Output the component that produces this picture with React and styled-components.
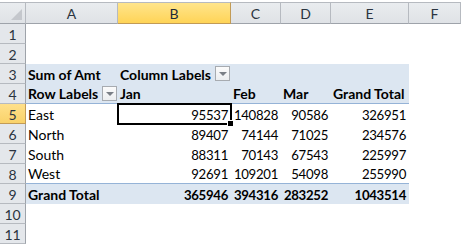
import styled, { createGlobalStyle } from "styled-components";

const GlobalStyle = createGlobalStyle`
  html, body { margin: 0; padding: 0; background: #ffffff; }
  body { font-family: Lato, "Liberation Sans", sans-serif; }
`;

const columns = ["A", "B", "C", "D", "E", "F"];

const regions = [
  { name: "East", values: [95537, 140828, 90586, 326951] },
  { name: "North", values: [89407, 74144, 71025, 234576] },
  { name: "South", values: [88311, 70143, 67543, 225997] },
  { name: "West", values: [92691, 109201, 54098, 255990] },
];

const totals = [365946, 394316, 283252, 1043514];

export default function App() {
  return (
    <>
      <GlobalStyle />
      <Window>
        <TopStrip />
        <Sheet>
          <Corner>
            <CornerMark />
          </Corner>
          {columns.map((c) => (
            <ColHead key={c} $active={c === "B"}>
              {c}
            </ColHead>
          ))}

          <RowHead>1</RowHead>
          {columns.map((c) => (
            <Cell key={c} />
          ))}

          <RowHead>2</RowHead>
          {columns.map((c) => (
            <Cell key={c} />
          ))}

          <RowHead>3</RowHead>
          <Cell $fill $bold>Sum of Amt</Cell>
          <Cell $fill $bold>
            Column Labels
            <DropButton />
          </Cell>
          <Cell $fill />
          <Cell $fill />
          <Cell $fill />
          <Cell />

          <RowHead>4</RowHead>
          <Cell $fill $bold $lineBottom>
            Row Labels
            <DropButton />
          </Cell>
          <Cell $fill $bold $lineBottom>Jan</Cell>
          <Cell $fill $bold $lineBottom>Feb</Cell>
          <Cell $fill $bold $lineBottom>Mar</Cell>
          <Cell $fill $bold $lineBottom>Grand Total</Cell>
          <Cell />

          {regions.map((r, i) => (
            <Row key={r.name} n={i + 5} region={r} last={i === regions.length - 1} />
          ))}

          <RowHead>9</RowHead>
          <Cell $fill $bold>Grand Total</Cell>
          {totals.map((t) => (
            <Cell key={t} $fill $bold $num>
              {t}
            </Cell>
          ))}
          <Cell />

          <RowHead>10</RowHead>
          {columns.map((c) => (
            <Cell key={c} />
          ))}

          <RowHead>11</RowHead>
          {columns.map((c) => (
            <Cell key={c} />
          ))}
        </Sheet>
      </Window>
    </>
  );
}

function Row({ n, region, last }) {
  return (
    <>
      <RowHead $active={n === 5}>{n}</RowHead>
      <Cell $lineBottom={last}>{region.name}</Cell>
      {region.values.map((v, i) => (
        <Cell key={i} $num $lineBottom={last} $selected={n === 5 && i === 0}>
          {v}
          {n === 5 && i === 0 && <FillHandle />}
        </Cell>
      ))}
      <Cell />
    </>
  );
}

const Window = styled.div`
  width: 461px;
  height: 244px;
  overflow: hidden;
  background: #ffffff;
`;

const TopStrip = styled.div`
  height: 2px;
  background: #ffffff;
`;

const Sheet = styled.div`
  display: grid;
  grid-template-columns: 26px 92px 113px 50px 50px 78px 1fr;
  grid-template-rows: 22px repeat(11, 20px);
`;

const headBase = `
  box-sizing: border-box;
  background: linear-gradient(#e9ecef, #dfe2e6);
  color: #2b3440;
  font-family: Lato, "Liberation Sans", sans-serif;
  font-size: 14px;
  display: flex;
  align-items: center;
  justify-content: center;
`;

const Corner = styled.div`
  ${headBase}
  position: relative;
  border-top: 1px solid #b6bac0;
  border-right: 1px solid #b6bac0;
  border-bottom: 1px solid #9ea3aa;
`;

const CornerMark = styled.div`
  position: absolute;
  right: 3px;
  bottom: 3px;
  width: 0;
  height: 0;
  border-left: 11px solid transparent;
  border-bottom: 11px solid #c4c7cc;
`;

const ColHead = styled.div`
  ${headBase}
  border-top: 1px solid #b6bac0;
  border-right: 1px solid ${(p) => (p.$active ? "#c29b56" : "#b6bac0")};
  border-bottom: 1px solid ${(p) => (p.$active ? "#c29b56" : "#9ea3aa")};
  background: ${(p) =>
    p.$active ? "linear-gradient(#ffe58c, #ffd457)" : "linear-gradient(#e9ecef, #dfe2e6)"};
  color: ${(p) => (p.$active ? "#1d2a38" : "#2b3440")};
  padding-top: 1px;
`;

const RowHead = styled.div`
  ${headBase}
  border-right: 1px solid ${(p) => (p.$active ? "#c29b56" : "#9ea3aa")};
  border-bottom: 1px solid ${(p) => (p.$active ? "#c29b56" : "#b6bac0")};
  background: ${(p) => (p.$active ? "linear-gradient(#ffe08a, #f9d26a)" : "#e4e7eb")};
  padding-top: 1px;
`;

const Cell = styled.div`
  position: relative;
  z-index: ${(p) => (p.$selected ? 2 : "auto")};
  box-sizing: border-box;
  height: 20px;
  padding: 0 3px 0 2px;
  display: flex;
  align-items: flex-end;
  justify-content: ${(p) => (p.$num ? "flex-end" : "flex-start")};
  background: ${(p) => (p.$fill ? "#dce6f1" : "#ffffff")};
  border-bottom: ${(p) => (p.$lineBottom ? "1px solid #95b3d7" : "none")};
  font-family: Lato, "Liberation Sans", sans-serif;
  font-size: ${(p) => (p.$num ? "13.2px" : "14px")};
  letter-spacing: ${(p) => (p.$num ? "-0.3px" : "0")};
  line-height: 18px;
  font-weight: ${(p) => (p.$bold ? 700 : 400)};
  color: #000000;
  white-space: nowrap;

  ${(p) =>
    p.$selected &&
    `
    &::after {
      content: "";
      position: absolute;
      left: -1px;
      top: -1px;
      right: -1px;
      bottom: -1px;
      border: 2px solid #000000;
      pointer-events: none;
    }
  `}
`;

const DropButton = styled.span`
  position: absolute;
  right: 1px;
  top: 2px;
  width: 15px;
  height: 15px;
  box-sizing: border-box;
  border: 1px solid #a7abb0;
  background: linear-gradient(#fbfbfb, #eceef0);

  &::after {
    content: "";
    position: absolute;
    left: 3px;
    top: 5px;
    border-left: 4px solid transparent;
    border-right: 4px solid transparent;
    border-top: 4px solid #7a7f86;
  }
`;

const FillHandle = styled.span`
  position: absolute;
  right: -3px;
  bottom: -3px;
  width: 5px;
  height: 5px;
  background: #000000;
  border: 1px solid #ffffff;
  z-index: 3;
`;
